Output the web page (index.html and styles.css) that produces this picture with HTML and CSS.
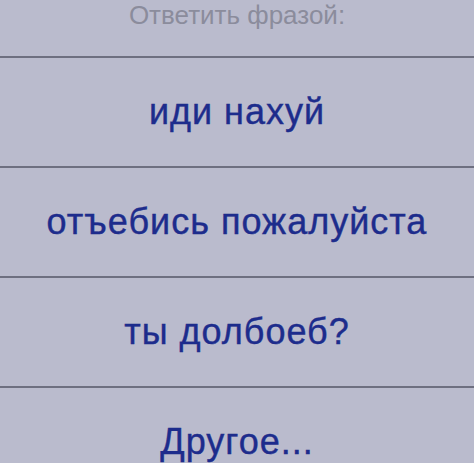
FILE: index.html
```html
<!DOCTYPE html>
<html lang="ru">
<head>
  <meta charset="UTF-8">
  <title>Ответить фразой</title>
  <link rel="stylesheet" href="styles.css">
</head>
<body>
  <div class="sheet">
    <div class="sheet-title">Ответить фразой:</div>
    <div class="sheet-item">иди нахуй</div>
    <div class="sheet-item">отъебись пожалуйста</div>
    <div class="sheet-item">ты долбоеб?</div>
    <div class="sheet-item">Другое...</div>
  </div>
</body>
</html>
```

FILE: styles.css
```css
html, body {
  margin: 0;
  height: 100%;
  overflow: hidden;
  background: #babbcd;
}
.sheet {
  font-family: "Liberation Sans", Arial, sans-serif;
  background: #babbcd;
}
.sheet-title {
  height: 58px;
  box-sizing: border-box;
  text-align: center;
  font-size: 26px;
  line-height: 30px;
  color: #8b8c9c;
  border-bottom: 2px solid #6e6f80;
}
.sheet-item {
  height: 110px;
  box-sizing: border-box;
  display: flex;
  align-items: center;
  justify-content: center;
  font-size: 36px;
  letter-spacing: 1px;
  color: #1d2c8c;
  -webkit-text-stroke: 0.4px #1d2c8c;
  border-bottom: 2px solid #6e6f80;
}
```
